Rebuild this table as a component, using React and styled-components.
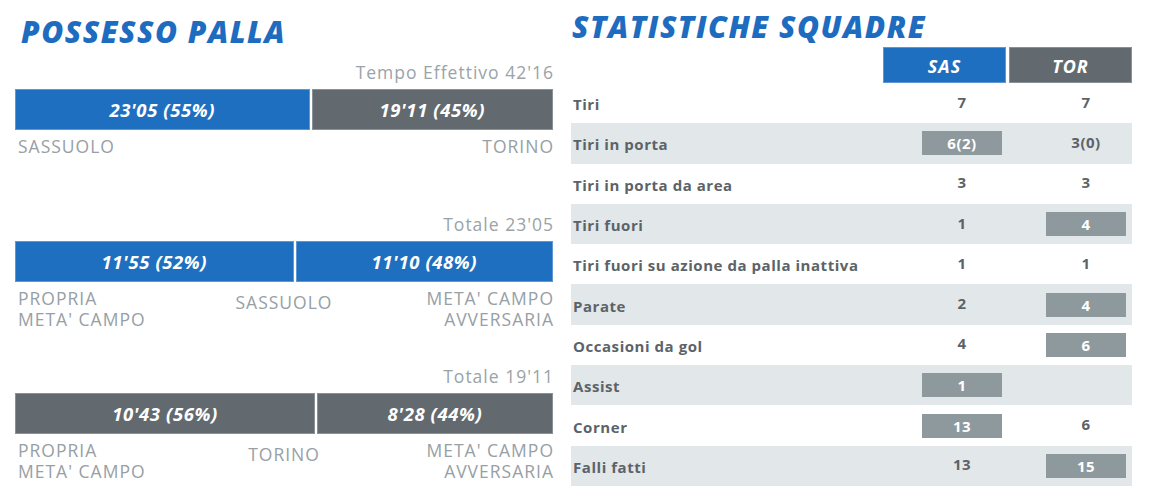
import React from "react";
import styled, { createGlobalStyle } from "styled-components";

const Global = createGlobalStyle`
  html, body { margin: 0; padding: 0; background: #ffffff; }
  body { font-family: "Open Sans", "Liberation Sans", sans-serif; }
`;

const BLUE = "#1f6fc0";
const GRAY = "#626a70";

const Page = styled.div`
  display: flex;
  gap: 18px;
  padding: 0 0 0 15px;
  width: 1151px;
  height: 489px;
  box-sizing: border-box;
  overflow: hidden;
`;

const LeftCol = styled.section`
  width: 538px;
  flex-shrink: 0;
  display: flex;
  flex-direction: column;
`;

const RightCol = styled.section`
  width: 561px;
  flex-shrink: 0;
  display: flex;
  flex-direction: column;
`;

const Title = styled.h1`
  margin: 0;
  flex-shrink: 0;
  height: ${(p) => p.$h}px;
  padding-top: ${(p) => p.$top}px;
  padding-left: ${(p) => p.$left}px;
  box-sizing: border-box;
  font-family: "Open Sans", sans-serif;
  font-weight: 800;
  font-style: italic;
  font-size: 30px;
  line-height: 32px;
  color: #1e6cbf;
  letter-spacing: 1.5px;
  white-space: nowrap;
`;

const Section = styled.div`
  height: 152px;
  flex-shrink: 0;
  display: flex;
  flex-direction: column;
`;

const Caption = styled.div`
  text-align: right;
  font-size: 17.5px;
  line-height: 20px;
  font-weight: 400;
  letter-spacing: 1px;
  color: #9aa3a8;
  margin-bottom: 7px;
  margin-right: -1px;
`;

const Bar = styled.div`
  display: flex;
  height: 41px;
  gap: 2px;
  background: #ffffff;
`;

const Segment = styled.div`
  height: 100%;
  box-sizing: border-box;
  border: 1px solid ${(p) => (p.$blue ? "#5e97d4" : "#8a9196")};
  background: ${(p) => (p.$blue ? BLUE : GRAY)};
  color: #ffffff;
  font-weight: 700;
  font-style: italic;
  font-size: 18.5px;
  display: flex;
  align-items: center;
  justify-content: center;
  letter-spacing: 0.6px;
`;

const Labels = styled.div`
  margin-top: 6px;
  display: grid;
  grid-template-columns: 1fr auto 1fr;
  align-items: start;
`;

const SideLabel = styled.div`
  font-size: 17.5px;
  line-height: 21px;
  letter-spacing: 1px;
  color: #97a0a5;
  text-transform: uppercase;
  white-space: pre-line;
  text-align: ${(p) => p.$align};
  padding-left: ${(p) => (p.$align === "left" ? "3px" : "0")};
  margin-right: ${(p) => (p.$align === "right" ? "-1px" : "0")};
`;

const MidLabel = styled.div`
  font-size: 17.5px;
  line-height: 21px;
  letter-spacing: 1px;
  padding-top: 4px;
  color: #97a0a5;
  text-transform: uppercase;
  text-align: center;
`;

const HeaderRow = styled.div`
  display: flex;
  flex-shrink: 0;
  justify-content: flex-end;
  gap: 3px;
  height: 36px;
`;

const HeadCell = styled.div`
  width: 123px;
  box-sizing: border-box;
  border: 1px solid ${(p) => (p.$blue ? "#5e97d4" : "#8a9196")};
  background: ${(p) => (p.$blue ? BLUE : GRAY)};
  color: #ffffff;
  font-weight: 700;
  font-style: italic;
  font-size: 18px;
  letter-spacing: 1px;
  padding-top: 2px;
  display: flex;
  align-items: center;
  justify-content: center;
`;

const Table = styled.div`
  display: flex;
  flex-direction: column;
`;

const Row = styled.div`
  display: grid;
  grid-template-columns: 1fr 80px 80px;
  column-gap: 44px;
  align-items: center;
  height: 40.3px;
  flex-shrink: 0;
  padding: 0 6px 0 2px;
  background: ${(p) => (p.$shade ? "#e2e7ea" : "transparent")};
`;

const RowLabel = styled.div`
  font-weight: 700;
  font-size: 15px;
  letter-spacing: 0.55px;
  color: #5c6368;
  white-space: nowrap;
  padding-top: 2px;
`;

const Value = styled.div`
  height: 24px;
  display: flex;
  align-items: center;
  justify-content: center;
  font-weight: 700;
  font-size: 15px;
  letter-spacing: 0.5px;
  color: ${(p) => (p.$hl ? "#ffffff" : "#5c6368")};
  background: ${(p) => (p.$hl ? "#8e999e" : "transparent")};
  margin-top: ${(p) => (p.$hl ? "0" : "-3px")};
`;

const possession = [
  {
    caption: "Tempo Effettivo 42'16",
    segments: [
      { text: "23'05 (55%)", pct: 55, blue: true },
      { text: "19'11 (45%)", pct: 45, blue: false },
    ],
    left: "SASSUOLO",
    mid: "",
    right: "TORINO",
  },
  {
    caption: "Totale 23'05",
    segments: [
      { text: "11'55 (52%)", pct: 52, blue: true },
      { text: "11'10 (48%)", pct: 48, blue: true },
    ],
    left: "PROPRIA\nMETA' CAMPO",
    mid: "SASSUOLO",
    right: "META' CAMPO\nAVVERSARIA",
  },
  {
    caption: "Totale 19'11",
    segments: [
      { text: "10'43 (56%)", pct: 56, blue: false },
      { text: "8'28 (44%)", pct: 44, blue: false },
    ],
    left: "PROPRIA\nMETA' CAMPO",
    mid: "TORINO",
    right: "META' CAMPO\nAVVERSARIA",
  },
];

const stats = [
  ["Tiri", "7", "7", null],
  ["Tiri in porta", "6(2)", "3(0)", "s"],
  ["Tiri in porta da area", "3", "3", null],
  ["Tiri fuori", "1", "4", "t"],
  ["Tiri fuori su azione da palla inattiva", "1", "1", null],
  ["Parate", "2", "4", "t"],
  ["Occasioni da gol", "4", "6", "t"],
  ["Assist", "1", "", "s"],
  ["Corner", "13", "6", "s"],
  ["Falli fatti", "13", "15", "t"],
];

export default function App() {
  return (
    <>
      <Global />
      <Page>
        <LeftCol>
          <Title $h={62} $top={16} $left={6}>
            POSSESSO PALLA
          </Title>
          {possession.map((s, i) => (
            <Section key={i}>
              <Caption>{s.caption}</Caption>
              <Bar>
                {s.segments.map((seg, j) => (
                  <Segment
                    key={j}
                    $blue={seg.blue}
                    style={{ flex: `${seg.pct} 1 0` }}
                  >
                    {seg.text}
                  </Segment>
                ))}
              </Bar>
              <Labels>
                <SideLabel $align="left">{s.left}</SideLabel>
                <MidLabel>{s.mid}</MidLabel>
                <SideLabel $align="right">{s.right}</SideLabel>
              </Labels>
            </Section>
          ))}
        </LeftCol>
        <RightCol>
          <Title $h={47} $top={11} $left={1}>
            STATISTICHE SQUADRE
          </Title>
          <HeaderRow>
            <HeadCell $blue>SAS</HeadCell>
            <HeadCell>TOR</HeadCell>
          </HeaderRow>
          <Table>
            {stats.map(([label, a, b, hl], i) => (
              <Row key={i} $shade={i % 2 === 1}>
                <RowLabel>{label}</RowLabel>
                <Value $hl={hl === "s"}>{a}</Value>
                <Value $hl={hl === "t"}>{b}</Value>
              </Row>
            ))}
          </Table>
        </RightCol>
      </Page>
    </>
  );
}
